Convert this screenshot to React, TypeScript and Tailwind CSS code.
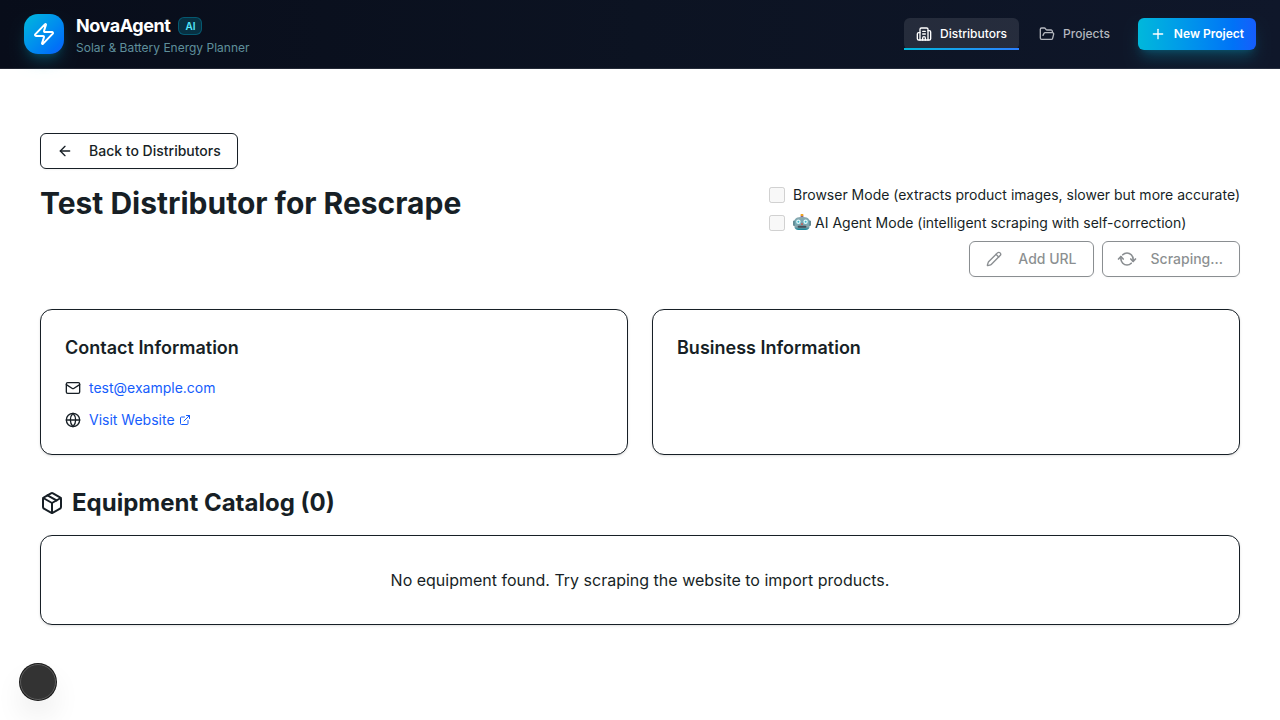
import type { ReactNode } from "react";
import {
  ArrowLeft,
  Building2,
  ExternalLink,
  FolderOpen,
  Globe,
  Mail,
  Package,
  Pencil,
  Plus,
  RefreshCw,
  Zap,
} from "lucide-react";

function RobotIcon() {
  return (
    <svg viewBox="0 0 18 18" className="size-[18px] shrink-0" role="img" aria-label="Robot">
      <defs>
        <linearGradient id="robot-face" x1="0" y1="0" x2="0" y2="1">
          <stop offset="0" stopColor="#8fa9b0" />
          <stop offset="0.45" stopColor="#6fa9b4" />
          <stop offset="0.75" stopColor="#8aa5ac" />
          <stop offset="1" stopColor="#0d8296" />
        </linearGradient>
      </defs>
      <rect x="7.6" y="1.4" width="2.8" height="2.6" fill="#7a5f94" />
      <circle cx="9" cy="0.9" r="1.4" fill="#f2a51f" />
      <rect x="0.2" y="6.4" width="2.2" height="5.6" rx="1" fill="#3f6d78" />
      <rect x="15.6" y="6.4" width="2.2" height="5.6" rx="1" fill="#3f6d78" />
      <path
        d="M1.4 7.4C1.4 4.4 4 3 9 3s7.6 1.4 7.6 4.400v4.800c0 2.600-1.600 3.800-4.200 3.800H5.600c-2.600 0-4.200-1.200-4.200-3.800z"
        fill="url(#robot-face)"
      />
      <circle cx="5.400" cy="7.700" r="2.200" fill="#e2fbfd" />
      <circle cx="12.600" cy="7.700" r="2.200" fill="#e2fbfd" />
      <circle cx="5.400" cy="7.700" r="1" fill="#42b7cb" />
      <circle cx="12.600" cy="7.700" r="1" fill="#42b7cb" />
      <path d="m9 8.600 1.100 2.200H7.900z" fill="#d8473d" />
      <rect x="4.600" y="11.800" width="8.800" height="2" rx="1" fill="#46505a" />
    </svg>
  );
}

function Header() {
  return (
    <header className="border-b border-white/10 bg-gradient-to-r from-[#080d1a] via-[#0c1322] to-[#0f172a]">
      <div className="flex h-17 items-center justify-between px-6">
        <div className="flex items-center gap-3">
          <div className="flex size-10 items-center justify-center rounded-[14px] bg-gradient-to-br from-[#00b8db] to-[#155dfc] text-white shadow-lg shadow-cyan-500/25">
            <Zap size={24} />
          </div>
          <div>
            <div className="flex items-center gap-2">
              <span className="text-lg leading-7 font-bold tracking-tight text-white">NovaAgent</span>
              <span className="rounded-md border border-cyan-500/30 bg-cyan-500/20 px-1.5 text-[10px] leading-4 font-semibold text-[#53eafd]">
                AI
              </span>
            </div>
            <p className="text-xs leading-4 text-[#5f8f9b]">Solar &amp; Battery Energy Planner</p>
          </div>
        </div>
        <nav className="flex items-center gap-2 text-xs font-medium">
          <a href="#distributors" className="relative flex h-8 items-center gap-2 rounded-md bg-white/10 px-3 text-white">
            <Building2 size={16} />
            Distributors
            <span className="absolute inset-x-0 bottom-0 h-0.5 bg-gradient-to-r from-[#00b8db] to-[#2b7fff]" />
          </a>
          <a href="#projects" className="flex h-8 items-center gap-2 rounded-md px-3 text-[#b4b7be]">
            <FolderOpen size={16} />
            Projects
          </a>
          <button
            type="button"
            className="ml-2 flex h-8 items-center gap-2 rounded-md bg-gradient-to-r from-[#00b8db] to-[#155dfc] px-3 font-semibold text-white shadow-lg shadow-cyan-500/25"
          >
            <Plus size={16} />
            New Project
          </button>
        </nav>
      </div>
    </header>
  );
}

function OutlineButton({ icon, children, disabled }: { icon: ReactNode; children: ReactNode; disabled?: boolean }) {
  return (
    <button
      type="button"
      disabled={disabled}
      className="flex h-9 items-center gap-4 rounded-md border border-[#171f26] bg-white px-4 text-sm font-medium shadow-xs disabled:opacity-50"
    >
      {icon}
      {children}
    </button>
  );
}

function ModeOption({ icon, children }: { icon?: ReactNode; children: ReactNode }) {
  return (
    <label className="flex items-center gap-2 text-sm">
      <input type="checkbox" disabled className="size-4" />
      <span className="flex items-center gap-1">
        {icon}
        {children}
      </span>
    </label>
  );
}

function Card({ title, children }: { title: string; children?: ReactNode }) {
  return (
    <section className="rounded-xl border border-[#171f26] bg-white p-6 shadow-sm">
      <h2 className="text-lg leading-7 font-semibold">{title}</h2>
      {children}
    </section>
  );
}

export default function App() {
  return (
    <div className="min-h-screen bg-white font-['Inter',sans-serif] text-[#171f26]">
      <Header />
      <main className="px-10 py-16">
        <div className="mb-4 flex">
          <OutlineButton icon={<ArrowLeft size={16} />}>Back to Distributors</OutlineButton>
        </div>
        <div className="mb-8 flex items-start justify-between gap-6">
          <h1 className="text-3xl leading-9 font-bold">Test Distributor for Rescrape</h1>
          <div className="flex flex-col gap-2">
            <ModeOption>Browser Mode (extracts product images, slower but more accurate)</ModeOption>
            <ModeOption icon={<RobotIcon />}>AI Agent Mode (intelligent scraping with self-correction)</ModeOption>
            <div className="flex justify-end gap-2">
              <OutlineButton disabled icon={<Pencil size={16} />}>
                Add URL
              </OutlineButton>
              <OutlineButton disabled icon={<RefreshCw size={16} strokeWidth={2.5} className="rotate-45" />}>
                Scraping...
              </OutlineButton>
            </div>
          </div>
        </div>
        <div className="mb-8 grid grid-cols-2 gap-6">
          <Card title="Contact Information">
            <div className="mt-4 flex flex-col gap-3 text-sm">
              <div className="flex items-center gap-2">
                <Mail size={16} />
                <a href="mailto:test@example.com" className="text-[#155dfc]">
                  test@example.com
                </a>
              </div>
              <div className="flex items-center gap-2">
                <Globe size={16} />
                <a href="#website" className="flex items-center gap-1 text-[#155dfc]">
                  Visit Website
                  <ExternalLink size={12} />
                </a>
              </div>
            </div>
          </Card>
          <Card title="Business Information" />
        </div>
        <h2 className="mb-4 flex items-center gap-2 text-2xl leading-8 font-bold">
          <Package size={24} />
          Equipment Catalog (0)
        </h2>
        <div className="rounded-xl border border-[#171f26] bg-white p-8 text-center shadow-sm">
          No equipment found. Try scraping the website to import products.
        </div>
      </main>
      <button
        type="button"
        aria-label="Open tools"
        className="fixed bottom-5 left-5 size-9 rounded-full border border-[#5c5c5c] bg-[#333333] shadow-[0_0_0_1px_#171717,0_16px_32px_-8px_rgba(0,0,0,0.24)]"
      />
    </div>
  );
}
